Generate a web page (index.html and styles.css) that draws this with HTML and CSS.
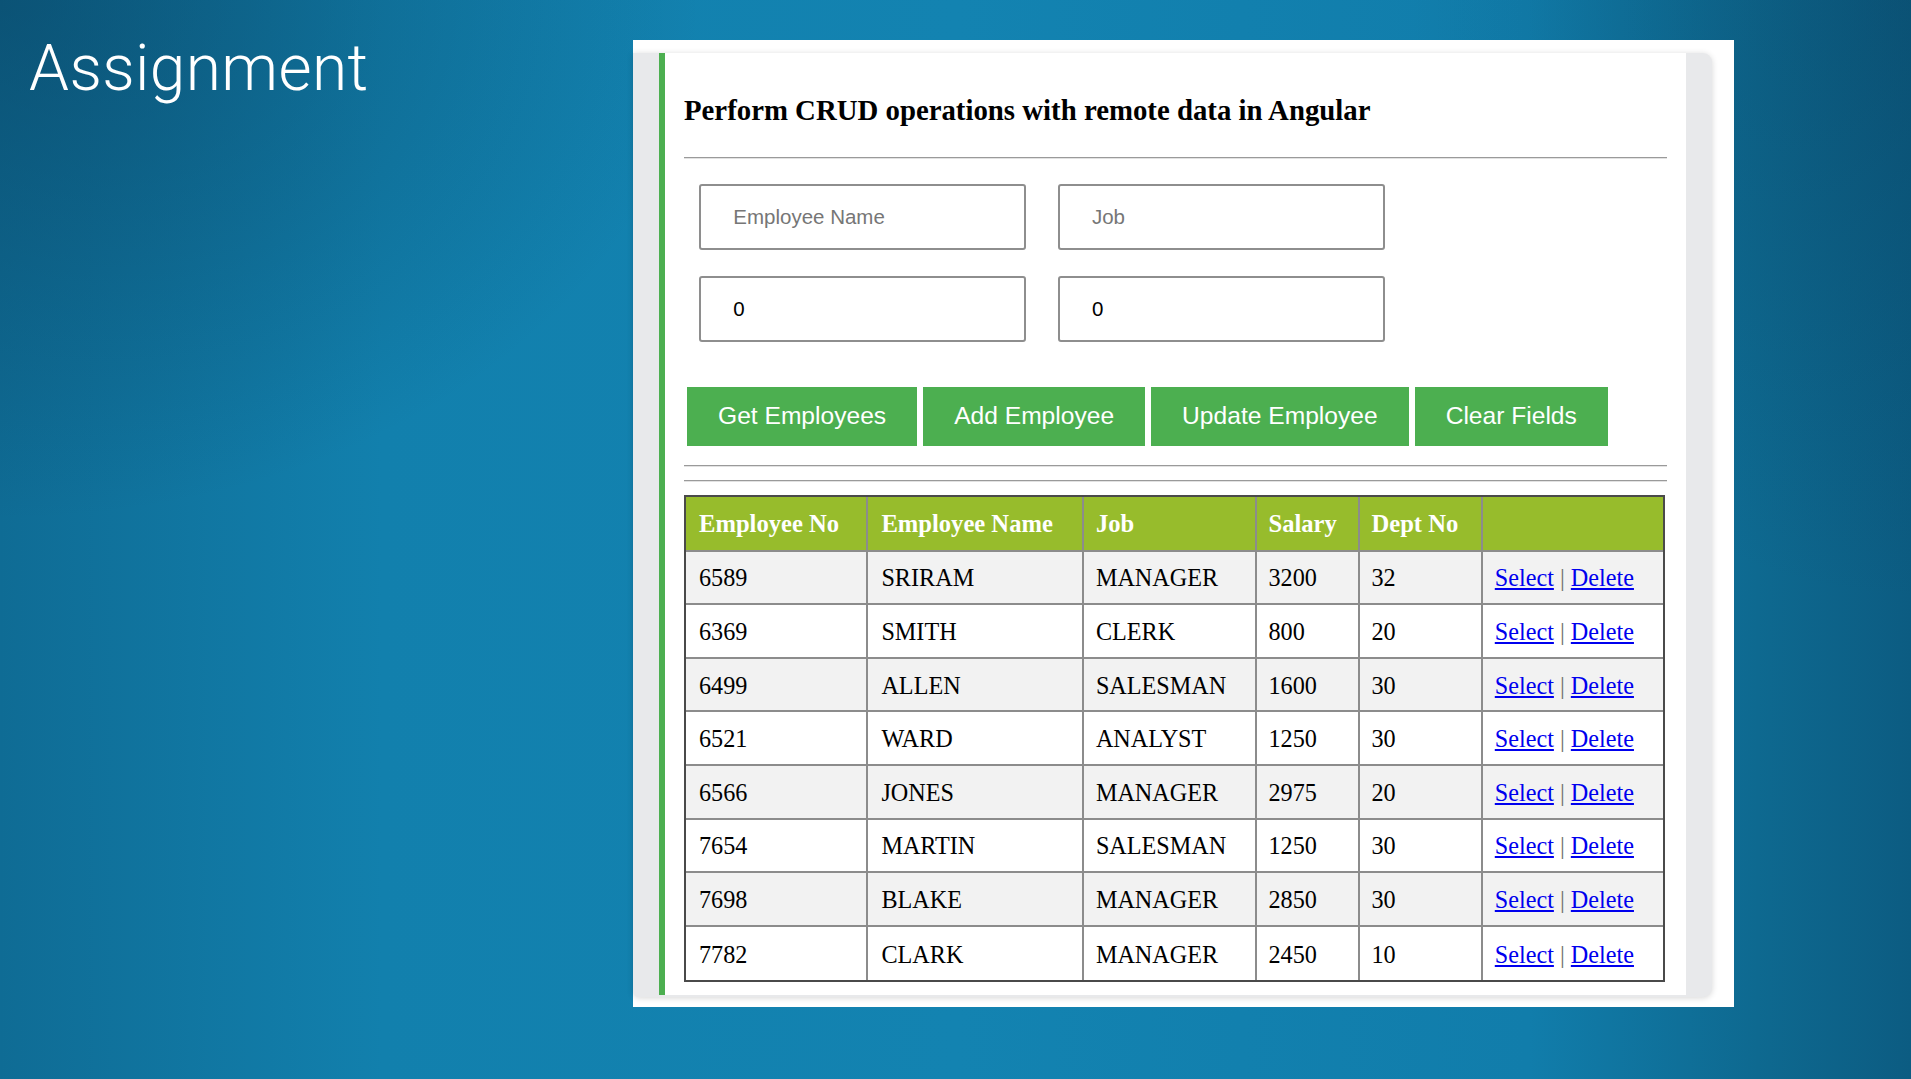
FILE: index.html
```html
<!DOCTYPE html>
<html lang="en">
<head>
<meta charset="utf-8">
<title>Assignment</title>
<link rel="stylesheet" href="styles.css">
</head>
<body>
<div class="slide">
  <h1 class="slide-title">Assignment</h1>
  <div class="shot">
    <div class="panel">
      <div class="card">
        <h2 class="card-title">Perform CRUD operations with remote data in Angular</h2>
        <hr class="rule rule-top">
        <div class="fields">
          <input class="field" type="text" placeholder="Employee Name">
          <input class="field" type="text" placeholder="Job">
          <input class="field" type="text" value="0">
          <input class="field" type="text" value="0">
        </div>
        <div class="actions">
          <button class="btn">Get Employees</button>
          <button class="btn">Add Employee</button>
          <button class="btn">Update Employee</button>
          <button class="btn">Clear Fields</button>
        </div>
        <hr class="rule rule-a">
        <hr class="rule rule-b">
        <table class="emp">
          <thead>
            <tr>
              <th class="c1">Employee No</th>
              <th class="c2">Employee Name</th>
              <th class="c3">Job</th>
              <th class="c4">Salary</th>
              <th class="c5">Dept No</th>
              <th class="c6"></th>
            </tr>
          </thead>
          <tbody>
            <tr><td>6589</td><td>SRIRAM</td><td>MANAGER</td><td>3200</td><td>32</td><td><a href="#">Select</a> <span class="sep">|</span> <a href="#">Delete</a></td></tr>
            <tr><td>6369</td><td>SMITH</td><td>CLERK</td><td>800</td><td>20</td><td><a href="#">Select</a> <span class="sep">|</span> <a href="#">Delete</a></td></tr>
            <tr><td>6499</td><td>ALLEN</td><td>SALESMAN</td><td>1600</td><td>30</td><td><a href="#">Select</a> <span class="sep">|</span> <a href="#">Delete</a></td></tr>
            <tr><td>6521</td><td>WARD</td><td>ANALYST</td><td>1250</td><td>30</td><td><a href="#">Select</a> <span class="sep">|</span> <a href="#">Delete</a></td></tr>
            <tr><td>6566</td><td>JONES</td><td>MANAGER</td><td>2975</td><td>20</td><td><a href="#">Select</a> <span class="sep">|</span> <a href="#">Delete</a></td></tr>
            <tr><td>7654</td><td>MARTIN</td><td>SALESMAN</td><td>1250</td><td>30</td><td><a href="#">Select</a> <span class="sep">|</span> <a href="#">Delete</a></td></tr>
            <tr><td>7698</td><td>BLAKE</td><td>MANAGER</td><td>2850</td><td>30</td><td><a href="#">Select</a> <span class="sep">|</span> <a href="#">Delete</a></td></tr>
            <tr><td>7782</td><td>CLARK</td><td>MANAGER</td><td>2450</td><td>10</td><td><a href="#">Select</a> <span class="sep">|</span> <a href="#">Delete</a></td></tr>
          </tbody>
        </table>
      </div>
    </div>
  </div>
</div>
</body>
</html>
```

FILE: styles.css
```css
html, body {
  margin: 0;
  padding: 0;
  width: 1911px;
  height: 1079px;
  overflow: hidden;
}

body {
  background:
    radial-gradient(ellipse 700px 520px at 0 0, rgba(8, 62, 92, 0.55), rgba(8, 62, 92, 0)),
    radial-gradient(ellipse 500px 600px at 100% 0, rgba(8, 62, 92, 0.35), rgba(8, 62, 92, 0)),
    linear-gradient(90deg, #0f6c95 0%, #1280ad 20%, #1383b1 50%, #117dab 80%, #0e6990 92%, #0c5c82 100%);
  font-family: "Liberation Serif", serif;
}

.slide {
  display: grid;
  grid-template-columns: 633px 1101px;
  align-items: start;
  height: 1079px;
}

.slide-title {
  margin: 36px 0 0 29px;
  font-family: Roboto, "Liberation Sans", sans-serif;
  font-weight: 300;
  font-size: 64px;
  line-height: 65px;
  color: #ffffff;
  letter-spacing: 0.4px;
}

.shot {
  margin-top: 40px;
  height: 967px;
  box-sizing: border-box;
  background: #ffffff;
  padding: 13px 22px 10px 0;
  display: flex;
}

.panel {
  flex: 1;
  display: flex;
  background: #e8e9eb;
  border-radius: 0 9px 9px 6px;
  padding: 0 26px 2px 26px;
  box-shadow: 0 1px 6px rgba(0, 0, 0, 0.16);
}

.card {
  flex: 1;
  background: #ffffff;
  border-left: 6px solid #4caf50;
  padding: 40px 19px 0 19px;
}

.card-title {
  margin: 0;
  font-family: "Liberation Serif", serif;
  font-weight: bold;
  font-size: 28.8px;
  line-height: 35px;
  color: #000;
}

.rule {
  display: block;
  height: 0;
  border: 0;
  border-top: 1px solid #9a9a9a;
  border-bottom: 1px solid #e2e2e2;
  margin: 0;
}

.rule-top { margin-top: 28.6px; }
.rule-a { margin-top: 19.3px; }
.rule-b { margin-top: 13.4px; }

.fields {
  display: grid;
  grid-template-columns: 327px 327px;
  column-gap: 31.6px;
  row-gap: 25.7px;
  margin: 25.3px 0 0 15.3px;
}

.field {
  box-sizing: border-box;
  width: 327px;
  height: 66px;
  margin: 0;
  border: 2px solid #8e8e8e;
  border-radius: 3px;
  padding: 0 0 0 32px;
  font-family: "Liberation Sans", Arial, sans-serif;
  font-size: 20.5px;
  color: #000;
  background: #fff;
  outline: none;
}

.field::placeholder {
  color: #767676;
}

.actions {
  display: flex;
  gap: 6px;
  margin: 45.7px 0 0 3px;
}

.btn {
  height: 58.3px;
  margin: 0;
  padding: 0 31px;
  border: 0;
  background: #4caf50;
  color: #ffffff;
  font-family: "Liberation Sans", Arial, sans-serif;
  font-size: 24.6px;
}

.emp {
  margin-top: 12.3px;
  width: 981px;
  table-layout: fixed;
  border-collapse: separate;
  border-spacing: 0;
  border: 2px solid #4a4a4a;
  font-family: "Liberation Serif", serif;
  font-size: 24.2px;
  color: #000;
}

.emp th,
.emp td {
  box-sizing: border-box;
  padding: 2px 0 0 13px;
  text-align: left;
  vertical-align: middle;
  border-right: 2px solid #8c8c8c;
  border-bottom: 2px solid #8c8c8c;
  white-space: nowrap;
}

.emp th:nth-child(n+3),
.emp td:nth-child(n+3) {
  padding-left: 11.5px;
}

.emp th:last-child,
.emp td:last-child {
  border-right: 0;
}

.emp tbody tr:last-child td {
  border-bottom: 0;
}

.emp th {
  height: 55px;
  background: #97bc2c;
  color: #ffffff;
  font-weight: bold;
  font-size: 24.6px;
}

.emp td {
  height: 53.6px;
}

.emp tbody tr:nth-child(odd) td {
  background: #f2f2f2;
}

.emp tbody tr:nth-child(even) td {
  background: #ffffff;
}

.c1 { width: 182.4px; }
.c2 { width: 216px; }
.c3 { width: 172.6px; }
.c4 { width: 103px; }
.c5 { width: 123.3px; }
.c6 { width: 179.7px; }

.emp a {
  color: #0000ee;
  text-decoration: underline;
}

.sep {
  color: #707070;
}
```
